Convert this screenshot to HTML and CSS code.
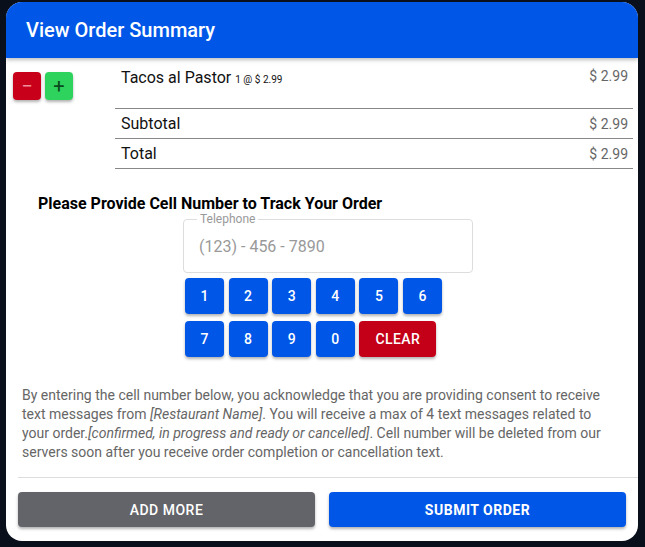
FILE: index.html
```html
<!DOCTYPE html>
<html lang="en">
<head>
    <meta charset="UTF-8">
    <meta name="viewport" content="width=device-width, initial-scale=1.0">
    <title>View Order Summary</title>
    <link rel="stylesheet" href="styles.css">
</head>
<body>
<div class="dialog">
    <div class="dialog-header">View Order Summary</div>

    <div class="dialog-body">
        <div class="order">
            <div class="qty">
                <button class="qty-btn minus">&minus;</button>
                <button class="qty-btn plus">+</button>
            </div>
            <div class="lines">
                <div class="line item">
                    <span class="name">Tacos al Pastor <small>1 @ $ 2.99</small></span>
                    <span class="price">$ 2.99</span>
                </div>
                <div class="line">
                    <span class="name">Subtotal</span>
                    <span class="price">$ 2.99</span>
                </div>
                <div class="line">
                    <span class="name">Total</span>
                    <span class="price">$ 2.99</span>
                </div>
            </div>
        </div>

        <h3 class="track-title">Please Provide Cell Number to Track Your Order</h3>

        <fieldset class="phone">
            <legend>Telephone</legend>
            <span class="placeholder">(123) - 456 - 7890</span>
        </fieldset>

        <div class="keypad">
            <div class="keyrow">
                <button class="key">1</button>
                <button class="key">2</button>
                <button class="key">3</button>
                <button class="key">4</button>
                <button class="key">5</button>
                <button class="key">6</button>
            </div>
            <div class="keyrow">
                <button class="key">7</button>
                <button class="key">8</button>
                <button class="key">9</button>
                <button class="key">0</button>
                <button class="key clear">CLEAR</button>
            </div>
        </div>

        <p class="consent">By entering the cell number below, you acknowledge that you are providing consent to receive text messages from <i>[Restaurant Name]</i>. You will receive a max of 4 text messages related to your order.<i>[confirmed, in progress and ready or cancelled]</i>. Cell number will be deleted from our servers soon after you receive order completion or cancellation text.</p>
    </div>

    <div class="dialog-footer">
        <button class="action add">ADD MORE</button>
        <button class="action submit">SUBMIT ORDER</button>
    </div>
</div>
</body>
</html>
```

FILE: styles.css
```css
body {
    margin: 0;
    padding: 0;
    background-color: #0a101b;
    font-family: Roboto, "Noto Sans", sans-serif;
}
.dialog {
    margin: 2px 0 0 6px;
    width: 632px;
    height: 539px;
    background-color: white;
    border-radius: 16px;
    overflow: hidden;
    display: flex;
    flex-direction: column;
}
.dialog-header {
    background-color: #0057e7;
    color: white;
    height: 56px;
    line-height: 56px;
    padding-left: 20px;
    font-size: 20px;
    font-weight: 500;
    box-shadow: 0 2px 4px rgba(0, 0, 0, 0.25);
    position: relative;
}
.dialog-body {
    flex: 1;
    overflow: hidden;
}
.order {
    display: flex;
}
.qty {
    width: 109px;
    padding: 14px 0 0 7px;
    box-sizing: border-box;
    display: flex;
    gap: 4px;
    align-items: flex-start;
}
.qty-btn {
    width: 28px;
    height: 28px;
    border: none;
    border-radius: 4px;
    padding: 0;
    font-size: 20px;
    font-family: Roboto, sans-serif;
    line-height: 28px;
    box-shadow: 0 2px 3px rgba(0, 0, 0, 0.3);
}
.minus {
    background-color: #c8001a;
    color: #f0909c;
}
.plus {
    background-color: #2ed35d;
    color: #0b4a1c;
}
.lines {
    flex: 1;
    margin-right: 5px;
}
.line {
    display: flex;
    justify-content: space-between;
    align-items: center;
    height: 29px;
    border-bottom: 1px solid #888;
    padding: 0 5px 0 6px;
    font-size: 16px;
    color: #111;
}
.line.item {
    align-items: flex-start;
    padding-top: 10px;
    box-sizing: border-box;
    height: 51px;
}
.line small {
    font-size: 10px;
}
.price {
    font-size: 14px;
    color: #666;
}
.track-title {
    margin: 25px 0 0 32px;
    font-size: 16px;
    font-weight: 700;
    color: #000;
}
.phone {
    margin: -1px 0 0 177px;
    width: 290px;
    height: 61px;
    box-sizing: border-box;
    border: 1px solid #ddd;
    border-radius: 4px;
    padding: 0 0 0 15px;
    display: flex;
    align-items: center;
}
.phone legend {
    font-size: 12px;
    color: #999;
    padding: 0 3px;
    margin-left: -2px;
    line-height: 14px;
}
.placeholder {
    font-size: 16px;
    color: #999;
    margin-top: -6px;
}
.keypad {
    margin: 5px 0 0 179px;
    display: flex;
    flex-direction: column;
    gap: 7px;
}
.keyrow {
    display: flex;
    gap: 4.6px;
}
.key {
    width: 39px;
    height: 36px;
    border: none;
    border-radius: 4px;
    background-color: #0057e7;
    color: white;
    font-family: Roboto, sans-serif;
    font-size: 14px;
    font-weight: 500;
    box-shadow: 0 2px 3px rgba(0, 0, 0, 0.3);
    padding: 0;
}
.key.clear {
    width: 77px;
    background-color: #c40018;
    letter-spacing: 0.4px;
}
.consent {
    margin: 29px 28px 0 16px;
    font-size: 14px;
    line-height: 19px;
    color: #666;
}
.dialog-footer {
    border-top: 1px solid #ddd;
    margin: 0 0 0 12px;
    padding: 14px 12px 14px 0;
    display: flex;
    gap: 14px;
}
.action {
    flex: 1;
    height: 35px;
    border: none;
    border-radius: 4px;
    color: white;
    font-family: Roboto, sans-serif;
    font-size: 14px;
    font-weight: 500;
    letter-spacing: 0.5px;
    box-shadow: 0 2px 3px rgba(0, 0, 0, 0.3);
}
.add {
    background-color: #636469;
}
.submit {
    background-color: #0057e7;
    font-weight: 700;
}
```
